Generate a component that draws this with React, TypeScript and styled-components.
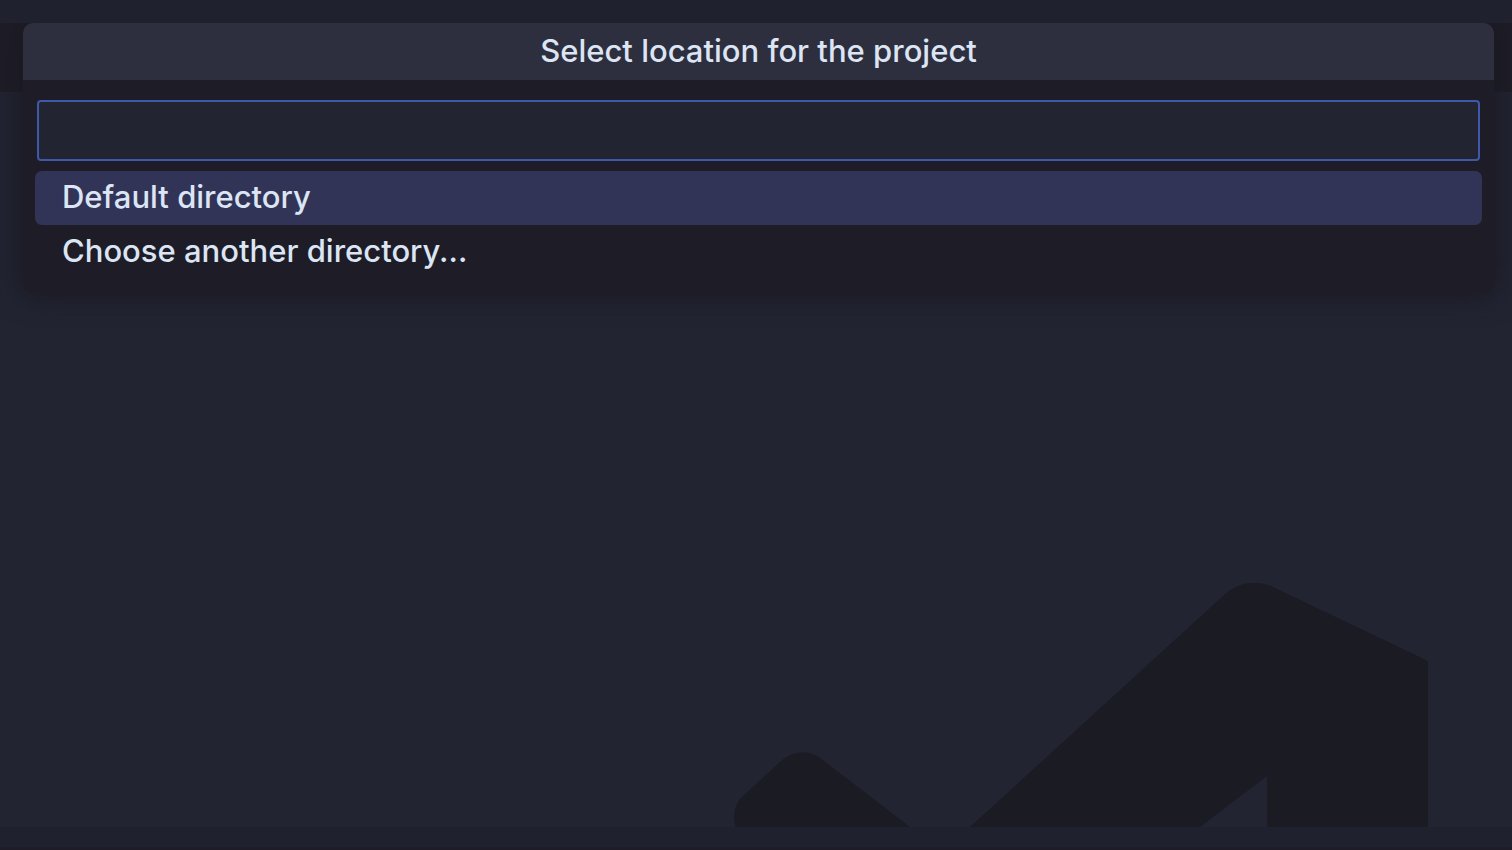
import React from "react";
import styled, { createGlobalStyle } from "styled-components";

const GlobalStyle = createGlobalStyle`
  *, *::before, *::after { box-sizing: border-box; }
  body {
    margin: 0;
    background: #222432;
    color: #dce5f4;
    font-family: Inter, "Liberation Sans", sans-serif;
    font-size: 31px;
    font-weight: 500;
  }
`;

const Workbench = styled.div`
  position: relative;
  display: flex;
  flex-direction: column;
  min-height: 100vh;
  overflow: hidden;
`;

const TitleBar = styled.header`
  height: 23px;
  background: #1f212e;
`;

const TabStrip = styled.div`
  height: 69px;
  background: #1e1d27;
`;

const Editor = styled.main`
  flex: 1;
  display: flex;
  align-items: flex-end;
  justify-content: flex-end;
  padding-right: 84px;
  background: #222432;
`;

const Watermark = styled.svg`
  display: block;
  width: 694px;
  height: 244px;
  fill: #1b1b24;
`;

const StatusBar = styled.footer`
  height: 23px;
  background: #1f212e;
  border-bottom: 3px solid #1e1d27;
`;

const Overlay = styled.div`
  position: absolute;
  top: 23px;
  left: 0;
  right: 0;
  bottom: 0;
  padding: 0 18px 0 23px;
  overflow: hidden;
`;

const QuickInput = styled.section`
  border-radius: 10px;
  background: #1e1d27;
  box-shadow: 0 0 28px 2px #191820;
`;

const PanelTitle = styled.h1`
  margin: 0;
  height: 57px;
  padding-bottom: 2px;
  border-radius: 10px 10px 0 0;
  background: #2e2f3e;
  font-size: 31px;
  font-weight: 500;
  line-height: 55px;
  text-align: center;
`;

const PanelBody = styled.div`
  padding: 20px 12px 14px;
`;

const FilterRow = styled.div`
  padding: 0 2px;
`;

const FilterInput = styled.input`
  display: block;
  width: 100%;
  height: 61px;
  padding: 0 12px;
  border: 2px solid #3f58a9;
  border-radius: 4px;
  outline: none;
  background: #222432;
  color: inherit;
  font: inherit;
`;

const OptionList = styled.ul`
  margin: 10px 0 0;
  padding: 0;
  list-style: none;
`;

const Option = styled.button<{ $active?: boolean }>`
  display: block;
  width: 100%;
  height: 54px;
  padding: 0 27px 2px;
  border: 0;
  border-radius: 7px;
  background: ${({ $active }) => ($active ? "#323457" : "transparent")};
  color: inherit;
  font: inherit;
  line-height: 52px;
  text-align: left;
`;

const options = ["Default directory", "Choose another directory..."];

export default function App() {
  return (
    <>
      <GlobalStyle />
      <Workbench>
        <TitleBar />
        <TabStrip />
        <Editor>
          <Watermark viewBox="0 0 694 244" aria-hidden="true">
            <path d="M1.500 244C-1 234 -0.500 221 9 213L46 179C57 168 73 166 85 174L176 244Z" />
            <path d="M236 244L489 13C503 -1 522 -4 539 4L690 76C693 77.500 694 78 694 81V244H533V193L466 244Z" />
          </Watermark>
        </Editor>
        <StatusBar />
        <Overlay>
          <QuickInput aria-labelledby="quick-input-title">
            <PanelTitle id="quick-input-title">Select location for the project</PanelTitle>
            <PanelBody>
              <FilterRow>
                <FilterInput type="text" aria-labelledby="quick-input-title" />
              </FilterRow>
              <OptionList>
                {options.map((label, index) => (
                  <li key={label}>
                    <Option type="button" $active={index === 0}>
                      {label}
                    </Option>
                  </li>
                ))}
              </OptionList>
            </PanelBody>
          </QuickInput>
        </Overlay>
      </Workbench>
    </>
  );
}
